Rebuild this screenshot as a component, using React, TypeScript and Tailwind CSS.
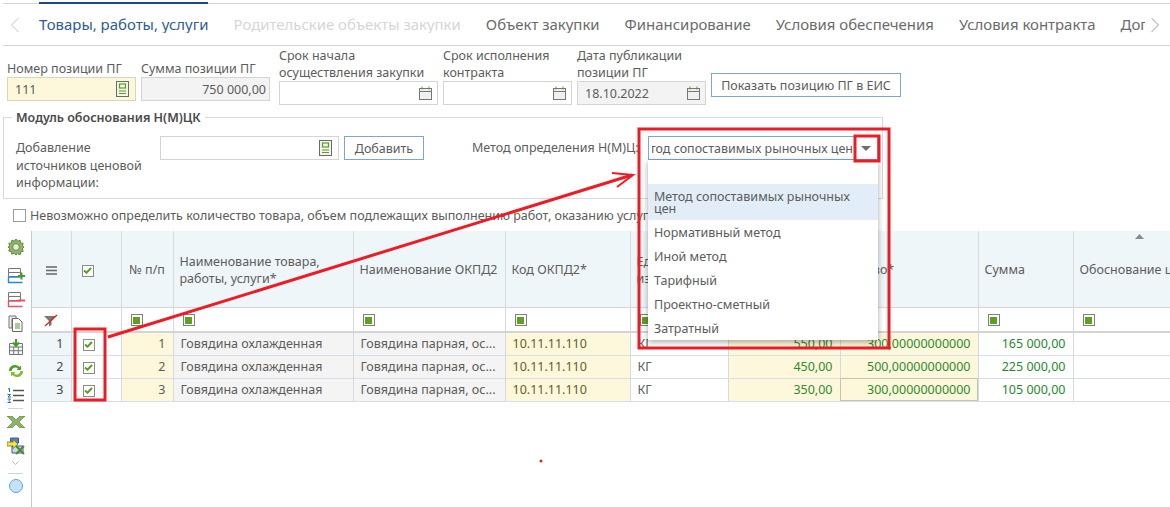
import React from 'react';

const tabs = ['Товары, работы, услуги', 'Родительские объекты закупки', 'Объект закупки', 'Финансирование', 'Условия обеспечения', 'Условия контракта', 'Дополнительная информация'];

const methods = ['Нормативный метод', 'Иной метод', 'Тарифный', 'Проектно-сметный', 'Затратный'];

const rows = [
  { n: 1, price: '550,00', qty: '300,00000000000', sum: '165 000,00' },
  { n: 2, price: '450,00', qty: '500,00000000000', sum: '225 000,00' },
  { n: 3, price: '350,00', qty: '300,00000000000', sum: '105 000,00' },
];

const widths = ['w-[39px]', 'w-[50px]', 'w-[52px]', 'w-[180px]', 'w-[152px]', 'w-[125px]', 'w-[98px]', 'w-[112px]', 'w-[138px]', 'w-[95px]', 'w-[97px]'];

const BookIcon = () => (
  <svg width="13" height="16" viewBox="0 0 13 16" className="shrink-0">
    <rect x="0.5" y="0.5" width="12" height="15" fill="#f4f4ec" stroke="#6b6b6b" />
    <rect x="3.5" y="3" width="6" height="4" fill="none" stroke="#5a9e1f" strokeWidth="1.2" />
    <path d="M3 10h7M3 12.5h7" stroke="#5a9e1f" strokeWidth="1.2" />
  </svg>
);

const CalendarIcon = () => (
  <svg width="13" height="14" viewBox="0 0 13 14" className="shrink-0">
    <rect x="0.5" y="2.5" width="12" height="11" fill="#f0f0f0" stroke="#777" />
    <path d="M0.5 5.5h12" stroke="#777" />
    <path d="M3 0.5v3M10 0.5v3" stroke="#5a9e1f" />
  </svg>
);

const CheckBox = () => (
  <span className="inline-flex w-[10px] h-[10px] box-content border border-[#8c8c8c] bg-white items-center justify-center align-middle">
    <svg width="9" height="7" viewBox="0 0 9 7">
      <path d="M1 3.500l2.500 2.200L8 1" fill="none" stroke="#5a9e1f" strokeWidth="2" />
    </svg>
  </span>
);

const FilterBox = () => (
  <span className="inline-flex w-[10px] h-[10px] box-content border border-[#7f7f7f] bg-white items-center justify-center align-middle">
    <span className="w-[7px] h-[7px] bg-[#5f9f22]" />
  </span>
);

const ToolIcon = ({ children, className = 'h-6' }: { children: React.ReactNode; className?: string }) => (
  <div className={`flex items-center justify-center ${className}`}>{children}</div>
);

const Toolbar = () => (
  <div className="w-[32px] shrink-0 border-r border-[#c8c8c8] pt-1">
    <ToolIcon>
      <svg width="18" height="18" viewBox="0 0 18 18">
        <path d="M9 1l1.600 2.200 2.600-.9.300 2.700 2.700.4-.9 2.600L17 9l-1.700 1.900.9 2.600-2.700.4-.3 2.700-2.600-.9L9 17l-1.600-1.700-2.600.9-.3-2.700-2.700-.4.9-2.600L1 9l1.700-1.100-.9-2.600 2.700-.4.3-2.700 2.600.9z" fill="#8fb36a" stroke="#5f8a3a" />
        <circle cx="9" cy="9" r="3.400" fill="#e6eedb" stroke="#5f8a3a" />
      </svg>
    </ToolIcon>
    <ToolIcon className="h-6 mt-1">
      <svg width="18" height="17" viewBox="0 0 18 17">
        <path d="M1.500 1.500h12v4h-12zM1.500 5.500h12v4h-12z" fill="#fff" stroke="#777" />
        <path d="M1.500 10h12M1.500 10v5.500h14" fill="none" stroke="#2a86c8" strokeWidth="1.400" />
        <path d="M14.500 5.500v7M11 9h7" stroke="#4a9a2a" strokeWidth="2" />
      </svg>
    </ToolIcon>
    <ToolIcon>
      <svg width="18" height="17" viewBox="0 0 18 17">
        <path d="M1.500 1.500h12v4h-12zM1.500 5.500h12v4h-12z" fill="#fff" stroke="#777" />
        <path d="M1.500 10h12M1.500 10v5.500h14" fill="none" stroke="#e8506a" strokeWidth="1.400" />
        <path d="M11 9.500h7" stroke="#e8506a" strokeWidth="2" />
      </svg>
    </ToolIcon>
    <ToolIcon>
      <svg width="15" height="17" viewBox="0 0 15 17">
        <path d="M1 1h7v2.500H4V13H1z" fill="#eee" stroke="#777" />
        <path d="M4.500 3.500h6l3.500 3.500v9.500h-9.500z" fill="#fff" stroke="#666" />
        <path d="M7 9h5M7 11h5M7 13h5" stroke="#4a9a2a" />
      </svg>
    </ToolIcon>
    <ToolIcon>
      <svg width="16" height="16" viewBox="0 0 16 16">
        <path d="M1.500 4.500h13v11h-13zM1.500 8h13M1.500 11.700h13M5.700 8v7.500M10.300 8v7.500" fill="#f6f6f6" stroke="#777" />
        <path d="M8 0v6M5 3.500L8 7l3-3.500" fill="none" stroke="#3f9a2a" strokeWidth="2" />
      </svg>
    </ToolIcon>
    <ToolIcon>
      <svg width="16" height="14" viewBox="0 0 16 14">
        <path d="M1 7a6 6 0 0 1 10.500-4L13 1.500V6H8.500l1.500-1.500A4 4 0 0 0 3.500 7z" fill="#4f9e2a" />
        <path d="M15 7a6 6 0 0 1-10.500 4L3 12.500V8h4.500L6 9.500A4 4 0 0 0 12.500 7z" fill="#86b83a" />
      </svg>
    </ToolIcon>
    <ToolIcon>
      <svg width="17" height="15" viewBox="0 0 17 15">
        <path d="M6 2.500h11M6 7.500h11M6 12.500h11" stroke="#555" strokeWidth="1.300" />
        <path d="M1 1l1.500-.6V4M.5 6.500h3L1 9h3M.5 11h3l-1.500 1.500L3.500 14.500H.5" fill="none" stroke="#2266cc" />
      </svg>
    </ToolIcon>
    <div className="h-px mx-2 mt-px bg-[#d4d4d4]" />
    <ToolIcon className="h-6 mt-px">
      <svg width="18" height="12" viewBox="0 0 18 12">
        <path d="M0 0h5l4 4 4-4h5l-6 6 6 6h-5L9 8l-4 4H0l6-6z" fill="#8fb36a" stroke="#4d7a2a" strokeWidth="0.600" />
      </svg>
    </ToolIcon>
    <ToolIcon>
      <svg width="18" height="18" viewBox="0 0 18 18">
        <path d="M3.500 1h8v5h-8z" fill="#5b7fc7" stroke="#3b5a9a" />
        <path d="M5 9h11v7H5z" fill="#c9d8ef" stroke="#3b5a9a" />
        <path d="M9 9l8 8M17 9l-8 8" stroke="#4d8a2a" strokeWidth="2" />
        <path d="M0 5h6V2.500L11 7l-5 4.500V9H0z" fill="#f0e53c" stroke="#66661a" strokeWidth="0.700" />
      </svg>
    </ToolIcon>
    <ToolIcon className="h-[10px]">
      <svg width="7" height="4" viewBox="0 0 7 4">
        <path d="M0.500 0.500l3 3 3-3" fill="none" stroke="#b5b5b5" />
      </svg>
    </ToolIcon>
    <div className="h-px mx-2 mt-[5px] bg-[#d4d4d4]" />
    <ToolIcon>
      <span className="w-3 h-3 box-content rounded-full border border-[#5aa6df] bg-[#c5e3f8]" />
    </ToolIcon>
  </div>
);

const App = () => {
  return (
    <div className="relative w-[1170px] h-[507px] overflow-hidden bg-white text-[12.5px] leading-[17px] text-[#5c5c5c] font-['Noto_Sans',sans-serif]">
      {/* Tabs */}
      <div className="mt-[3px] ml-[3px] h-[43px] border-y border-[#d4d4d4] flex items-center">
        <svg width="10" height="16" viewBox="0 0 10 16" className="ml-[7px] shrink-0">
          <path d="M8.500 1L1.500 8l7 7" fill="none" stroke="#dcdcdc" strokeWidth="1.200" />
        </svg>
        <div className="ml-[19px] w-[1106px] flex gap-[25px] overflow-hidden whitespace-nowrap text-[14.95px]">
          {tabs.map((tab, i) => (
            <span key={tab} className={i === 0 ? 'text-[#2f5c8f]' : i === 1 ? 'text-[#d6d6d6]' : 'text-[#6b6b6b]'}>
              {tab}
            </span>
          ))}
        </div>
        <svg width="10" height="16" viewBox="0 0 10 16" className="ml-[5px] shrink-0">
          <path d="M1.500 1l7 7-7 7" fill="none" stroke="#c4c4c4" strokeWidth="1.200" />
        </svg>
      </div>
      <div className="absolute left-[39px] top-[2px] w-[169px] h-[2px] bg-[#1c4a80]" />

      {/* Plan position fields */}
      <div className="flex pl-[7px] h-[63px] items-start">
        <div className="w-[129px] mt-[14px]">
          <div className="whitespace-nowrap">Номер позиции ПГ</div>
          <div className="h-[24px] border border-[#d9d5b5] bg-[#fdf8dc] flex items-center justify-between pl-[7px] pr-[6px]">
            <span>111</span>
            <BookIcon />
          </div>
        </div>
        <div className="w-[129px] ml-[5px] mt-[14px]">
          <div className="whitespace-nowrap">Сумма позиции ПГ</div>
          <div className="h-[24px] border border-[#d4d4d4] bg-[#f3f3f3] flex items-center justify-end pr-[3px]">
            750 000,00
          </div>
        </div>
        <div className="w-[159px] ml-[9px] mt-px">
          <div>Срок начала<br />осуществления закупки</div>
          <div className="h-[24px] border border-[#d4d4d4] flex items-center justify-end pr-[5px]">
            <CalendarIcon />
          </div>
        </div>
        <div className="w-[129px] ml-[5px] mt-px">
          <div>Срок исполнения<br />контракта</div>
          <div className="h-[24px] border border-[#d4d4d4] flex items-center justify-end pr-[5px]">
            <CalendarIcon />
          </div>
        </div>
        <div className="w-[129px] ml-[5px] mt-px">
          <div>Дата публикации<br />позиции ПГ</div>
          <div className="h-[24px] border border-[#d4d4d4] bg-[#f3f3f3] flex items-center justify-between pl-[7px] pr-[5px]">
            <span>18.10.2022</span>
            <CalendarIcon />
          </div>
        </div>
        <div className="w-[190px] h-[24px] ml-[5px] mt-[27px] border border-[#7da7d0] flex items-center justify-center whitespace-nowrap">
          Показать позицию ПГ в ЕИС
        </div>
      </div>

      {/* Price module */}
      <fieldset className="ml-[3px] w-[880px] h-[90px] border border-[#d9d9d9]">
        <legend className="ml-[8px] px-1 font-semibold text-[#4a4a4a] whitespace-nowrap">Модуль обоснования Н(М)ЦК</legend>
        <div className="flex items-start pl-[12px] pt-[10px]">
          <div className="w-[144px] pt-[3px] leading-[17.5px]">Добавление<br />источников ценовой<br />информации:</div>
          <div className="w-[179px] h-[24px] border border-[#d4d4d4] flex items-center justify-end pr-[6px]">
            <BookIcon />
          </div>
          <div className="w-[80px] h-[24px] ml-[5px] pt-px border border-[#7da7d0] flex items-center justify-center">Добавить</div>
          <div className="ml-[48px] w-[176px] pt-[3px] whitespace-nowrap">Метод определения Н(М)Ц:</div>
          <div className="relative w-[230px] h-[24px] border border-[#7da7d0] flex items-center">
            <div className="ml-[3px] w-[201px] pt-px overflow-hidden flex justify-end whitespace-nowrap">
              <span className="shrink-0">Метод сопоставимых рыночных цен</span>
            </div>
            <svg width="10" height="5" viewBox="0 0 10 5" className="ml-[8px]">
              <path d="M0 0h10L5 5z" fill="#6e6e6e" />
            </svg>
            {/* Dropdown */}
            <div className="absolute left-[-1px] top-[23px] w-[230px] h-[180px] pt-[24px] bg-white shadow-[0_2px_6px_rgba(0,0,0,0.35)] z-10">
              <div className="h-[36px] bg-[#e3edf7] px-[6px] pt-[7px] leading-[12px]">Метод сопоставимых рыночных цен</div>
              {methods.map((m) => (
                <div key={m} className="h-[24px] px-[6px] flex items-center">{m}</div>
              ))}
            </div>
          </div>
        </div>
      </fieldset>

      {/* Checkbox line */}
      <div className="flex items-center h-[32px] pl-[13px] gap-[4px] whitespace-nowrap">
        <span className="w-[11px] h-[11px] box-content border border-[#9a9a9a]" />
        <span>Невозможно определить количество товара, объем подлежащих выполнению работ, оказанию услуг (</span>
      </div>

      {/* Grid */}
      <div className="flex h-[276px]">
        <Toolbar />
        <table className="table-fixed w-[1138px] h-fit border-collapse">
          <colgroup>
            {widths.map((w, i) => <col key={i} className={w} />)}
          </colgroup>
          <thead>
            <tr className="h-[76px] bg-[#eff6fa] [&>th]:pt-[2px]">
              <th className="border-r border-[#d4dbe0] text-center font-normal">
                <svg width="11" height="9" viewBox="0 0 11 9" className="inline-block">
                  <path d="M0 1h11M0 4.500h11M0 8h11" stroke="#666" strokeWidth="1.500" />
                </svg>
              </th>
              <th className="border-r border-[#d4dbe0] font-normal text-left pl-[10px]"><CheckBox /></th>
              <th className="border-r border-[#d4dbe0] font-normal text-center whitespace-nowrap">№ п/п</th>
              <th className="border-r border-[#d4dbe0] font-normal text-left px-[6px]">Наименование товара, работы, услуги*</th>
              <th className="border-r border-[#d4dbe0] font-normal text-left px-[6px] whitespace-nowrap">Наименование ОКПД2</th>
              <th className="border-r border-[#d4dbe0] font-normal text-left px-[6px]">Код ОКПД2*</th>
              <th className="border-r border-[#d4dbe0] font-normal text-left px-[6px]">Единица измерения</th>
              <th className="border-r border-[#d4dbe0] font-normal text-left px-[6px]">Цена</th>
              <th className="border-r border-[#d4dbe0] font-normal text-left px-[6px]">Кол-во*</th>
              <th className="border-r border-[#d4dbe0] font-normal text-left px-[6px]">Сумма</th>
              <th className="relative font-normal text-left px-[6px] whitespace-nowrap overflow-hidden">
                Обоснование цены
                <svg width="9" height="5" viewBox="0 0 9 5" className="absolute left-[61px] top-[3px]">
                  <path d="M0 5h9L4.500 0z" fill="#8a8a8a" />
                </svg>
              </th>
            </tr>
            <tr className="h-[25px] border-y border-[#d4d4d4]">
              <th className="border-r border-[#d4dbe0] text-center">
                <svg width="14" height="13" viewBox="0 0 14 13" className="inline-block">
                  <path d="M0 2h12L7.500 7v4L5 12.500V7z" fill="#777" />
                  <path d="M1 12L13 1" stroke="#e02020" strokeWidth="1.300" />
                </svg>
              </th>
              <th className="border-r border-[#d4dbe0]" />
              {widths.slice(2).map((_, i) => (
                <th key={i} className={`text-left pl-[9px] ${i < 8 ? 'border-r border-[#d4dbe0]' : ''}`}>
                  <FilterBox />
                </th>
              ))}
            </tr>
          </thead>
          <tbody className="border-t-2 border-[#d4d4d4]">
            {rows.map((r) => (
              <tr key={r.n} className="h-[23px] border-b border-[#d6dfe8]">
                <td className="border-r border-[#d4dbe0] bg-[#eff6fa] text-right pr-[7px] text-[#444]">{r.n}</td>
                <td className="border-r border-[#d4dbe0] text-left pl-[11px]"><CheckBox /></td>
                <td className="border-r border-[#d4dbe0] bg-[#fdf8dc] text-right pr-[7px]">{r.n}</td>
                <td className="border-r border-[#d4dbe0] bg-[#f4f4f4] px-[7px] whitespace-nowrap overflow-hidden">Говядина охлажденная</td>
                <td className="border-r border-[#d4dbe0] bg-[#f4f4f4] px-[7px] whitespace-nowrap overflow-hidden">Говядина парная, ос...</td>
                <td className="border-r border-[#d4dbe0] bg-[#fdf8dc] px-[7px] text-[#6b5a2a]">10.11.11.110</td>
                <td className="border-r border-[#d4dbe0] px-[7px]">КГ</td>
                <td className="border-r border-[#d4dbe0] bg-[#fdf8dc] text-right pr-[7px] text-[#2f8a2f]">{r.price}</td>
                <td className={`border-r border-[#d4dbe0] bg-[#fdf8dc] text-right pr-[7px] text-[#2f8a2f] ${r.n === 3 ? 'outline outline-1 -outline-offset-1 outline-[#c4c4b4]' : ''}`}>{r.qty}</td>
                <td className="border-r border-[#d4dbe0] text-right pr-[7px] text-[#1f8a2f]">{r.sum}</td>
                <td />
              </tr>
            ))}
          </tbody>
        </table>
      </div>

      {/* Red annotations drawn over the screenshot */}
      <svg width="1170" height="507" viewBox="0 0 1170 507" className="absolute left-0 top-0 pointer-events-none z-20">
        <g fill="none" stroke="#ed1c24" strokeWidth="3">
          <rect x="639" y="129" width="250" height="219" />
          <rect x="855" y="136" width="24" height="25" />
          <rect x="75" y="329" width="30" height="71" />
          <path d="M108 337L632 175" />
          <path d="M612 173l21 2-16 12" strokeWidth="2" />
        </g>
        <circle cx="541" cy="461" r="1.500" fill="#ed1c24" />
      </svg>
    </div>
  );
};

export default App;
